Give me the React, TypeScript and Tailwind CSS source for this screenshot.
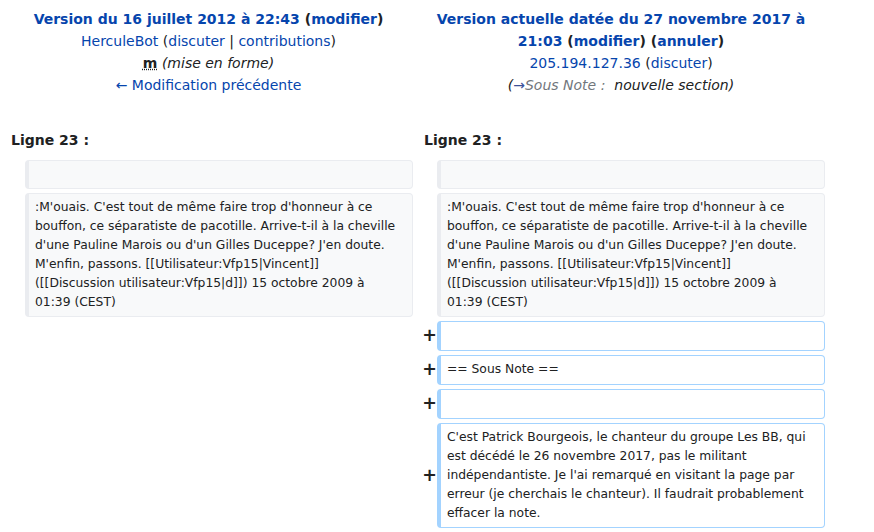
import React from "react";

const F = { fontFamily: '"DejaVu Sans", "Liberation Sans", sans-serif' };

const link = "text-[#0645ad]";

function Lines({ lines }: { lines: string[] }) {
  return (
    <>
      {lines.map((l, i) => (
        <div key={i} className="whitespace-nowrap">
          {l}
        </div>
      ))}
    </>
  );
}

function Context({ lines }: { lines?: string[] }) {
  return (
    <div className="rounded-[4px] border border-[#eaecf0] border-l-4 bg-[#f8f9fa] px-[6px] py-[4px] text-[12.32px] leading-[19px] text-[#202122] min-h-[29px]">
      {lines ? <Lines lines={lines} /> : <div className="h-[19px]" />}
    </div>
  );
}

function Added({ lines }: { lines?: string[] }) {
  return (
    <div className="rounded-[4px] border border-[#a3d3ff] border-l-4 bg-white px-[6px] py-[4px] text-[12.32px] leading-[19px] text-[#202122] min-h-[30px]">
      {lines ? <Lines lines={lines} /> : <div className="h-[19px]" />}
    </div>
  );
}

function Marker() {
  return (
    <div className="flex items-center justify-end -mr-[4px] text-[17.5px] font-bold leading-none text-[#202122]">
      +
    </div>
  );
}

const ctx = [
  ":M'ouais. C'est tout de même faire trop d'honneur à ce",
  "bouffon, ce séparatiste de pacotille. Arrive-t-il à la cheville",
  "d'une Pauline Marois ou d'un Gilles Duceppe? J'en doute.",
  "M'enfin, passons. [[Utilisateur:Vfp15|Vincent]]",
  "([[Discussion utilisateur:Vfp15|d]]) 15 octobre 2009 à",
  "01:39 (CEST)",
];

const added = [
  "C'est Patrick Bourgeois, le chanteur du groupe Les BB, qui",
  "est décédé le 26 novembre 2017, pas le militant",
  "indépendantiste. Je l'ai remarqué en visitant la page par",
  "erreur (je cherchais le chanteur). Il faudrait probablement",
  "effacer la note.",
];

export default function App() {
  return (
    <div style={F} className="w-[874px] h-[532px] overflow-hidden bg-white text-[#202122]">
      <div className="grid w-[829px] grid-cols-[17px_388px_16px_388px] gap-x-[4px] gap-y-[4px] px-[4px] pt-[8px]">
        {/* Header */}
        <div className="col-span-2 text-center text-[14px] leading-[22px]">
          <div className="font-bold">
            <span className={link}>Version du 16 juillet 2012 à 22:43</span>{" "}
            (<span className={link}>modifier</span>)
          </div>
          <div>
            <span className={link}>HerculeBot</span> (
            <span className={link}>discuter</span> |{" "}
            <span className={link}>contributions</span>)
          </div>
          <div>
            <abbr title="Cette modification est mineure." className="font-bold">
              m
            </abbr>{" "}
            <span className="italic">(mise en forme)</span>
          </div>
          <div>
            <span className={link}>← Modification précédente</span>
          </div>
        </div>
        <div className="col-span-2 text-center text-[14px] leading-[22px]">
          <div className="font-bold">
            <span className={link}>Version actuelle datée du 27 novembre 2017 à</span>
          </div>
          <div className="font-bold">
            <span className={link}>21:03</span> (<span className={link}>modifier</span>) (
            <span className={link}>annuler</span>)
          </div>
          <div>
            <span className={link}>205.194.127.36</span> (<span className={link}>discuter</span>)
          </div>
          <div className="italic">
            (<span className="text-[#3b5199]">→</span>
            <span className="text-[#72777d]">Sous Note&nbsp;:&nbsp;</span> nouvelle section)
          </div>
        </div>

        {/* Line numbers */}
        <div className="col-span-2 mt-[29px] pb-[5px] pl-[7px] text-[14px] font-bold leading-[22px]">
          Ligne 23&nbsp;:
        </div>
        <div className="col-span-2 mt-[29px] pb-[5px] pl-[7px] text-[14px] font-bold leading-[22px]">
          Ligne 23&nbsp;:
        </div>

        {/* Row 1: empty context */}
        <div />
        <Context />
        <div />
        <Context />

        {/* Row 2: context text */}
        <div />
        <Context lines={ctx} />
        <div />
        <Context lines={ctx} />

        {/* Added rows */}
        <div />
        <div />
        <Marker />
        <Added />

        <div />
        <div />
        <Marker />
        <Added lines={["== Sous Note =="]} />

        <div />
        <div />
        <Marker />
        <Added />

        <div />
        <div />
        <Marker />
        <Added lines={added} />
      </div>
    </div>
  );
}
